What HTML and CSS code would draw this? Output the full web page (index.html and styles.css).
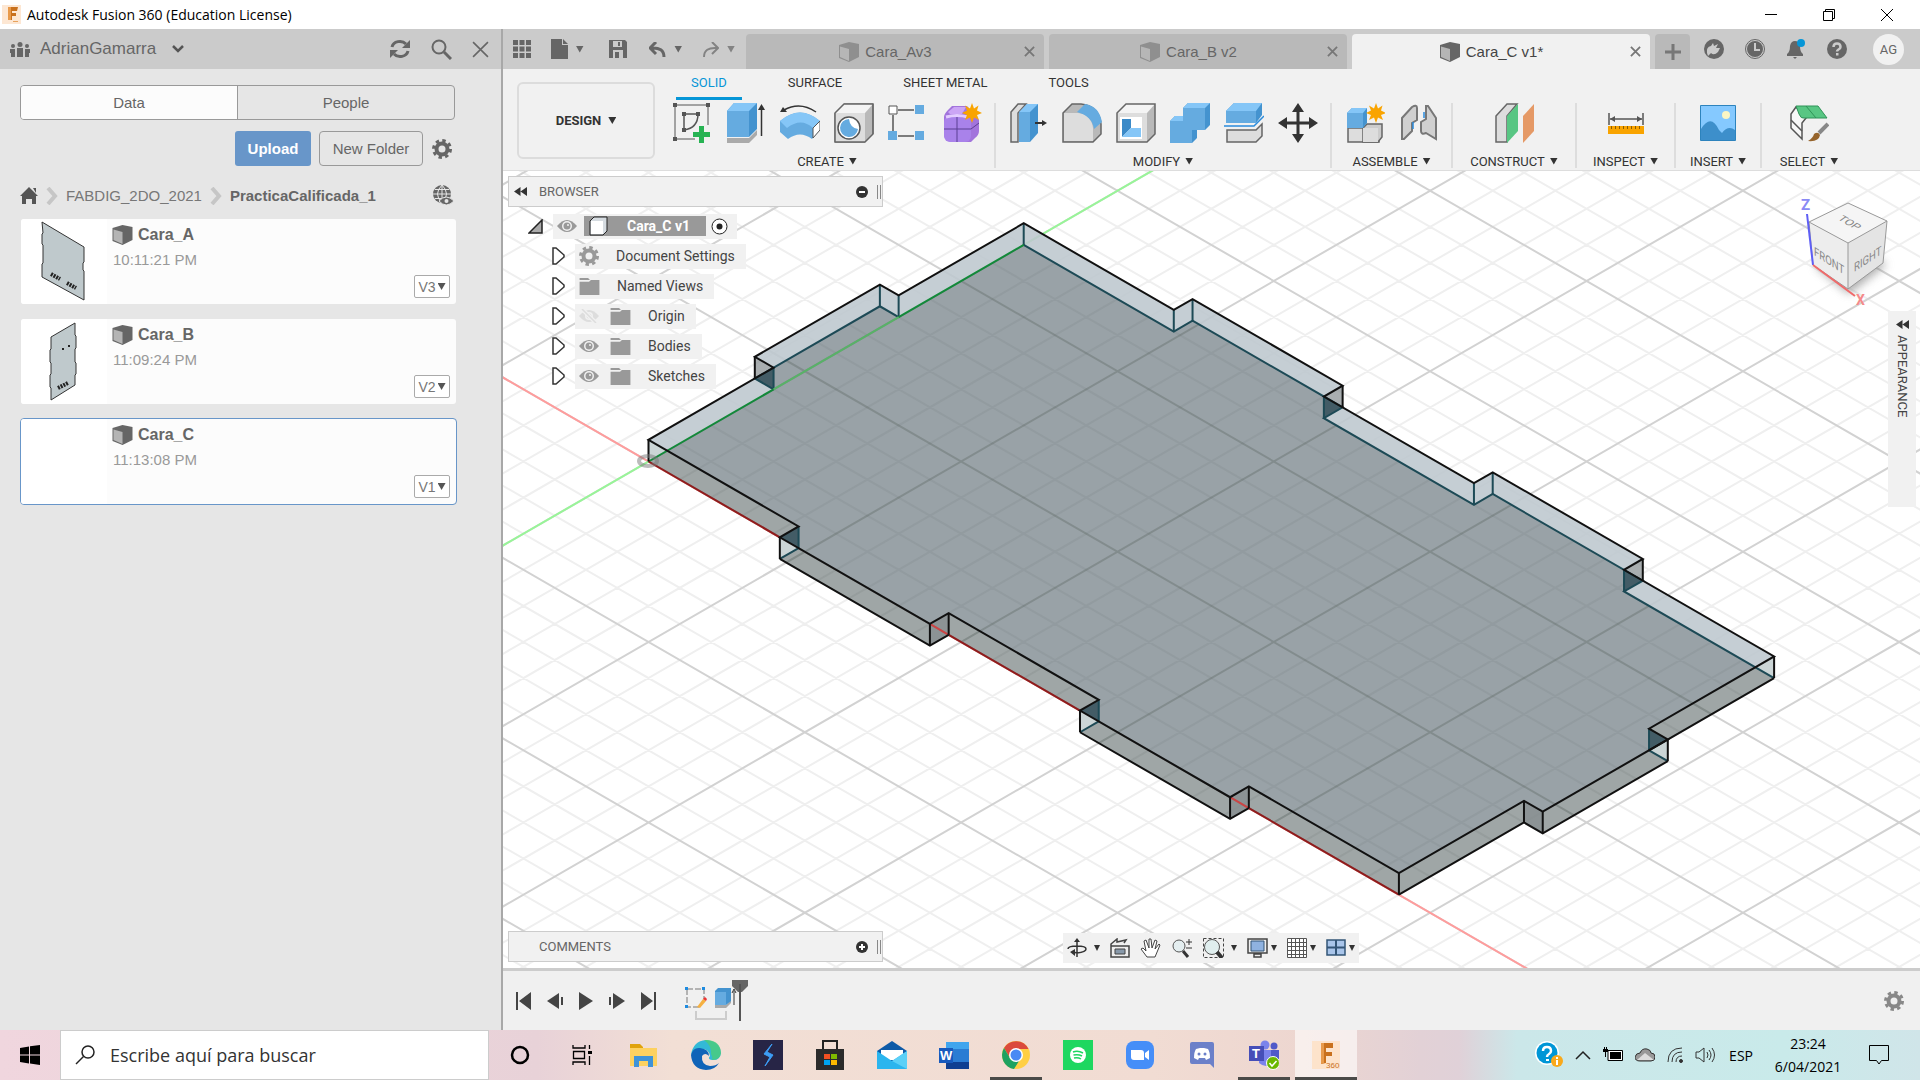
FILE: index.html
```html
<!DOCTYPE html>
<html lang="es">
<head>
<meta charset="utf-8">
<title>Autodesk Fusion 360 (Education License)</title>
<link rel="stylesheet" href="styles.css">
</head>
<body>
<svg class="defs" aria-hidden="true">
  <symbol id="cube" viewBox="0 0 20 20"><path d="M0 3 10 0l10 2v13l-10 5L0 16z" fill="#666"/><path d="M1 4.500l9 2.500v12L1 15z" fill="#b5b5b5"/></symbol>
  <symbol id="gear" viewBox="0 0 20 20"><circle cx="10" cy="10" r="5.500" fill="none" stroke="currentColor" stroke-width="4"/><circle cx="10" cy="10" r="8.500" fill="none" stroke="currentColor" stroke-width="3" stroke-dasharray="3.400 3.280"/></symbol>
  <symbol id="close" viewBox="0 0 16 16"><path d="M1 1l14 14M15 1 1 15" fill="none" stroke="currentColor" stroke-width="1.500"/></symbol>
  <symbol id="close-bold" viewBox="0 0 12 12"><path d="M1 1l10 10M11 1 1 11" fill="none" stroke="#777" stroke-width="2"/></symbol>
  <symbol id="rewind" viewBox="0 0 13 9"><path d="M6.500 0v9L0 4.500zM13 0v9L6.500 4.500z" fill="#333"/></symbol>
  <symbol id="eye" viewBox="0 0 20 14"><path d="M0 7Q10-5 20 7 10 19 0 7z" fill="#999"/><circle cx="10" cy="7" r="5" fill="#f1f1f1"/><circle cx="10" cy="7" r="3.500" fill="#999"/><circle cx="11" cy="6" r="1" fill="#f1f1f1"/></symbol>
  <symbol id="eye-off" viewBox="0 0 20 14"><path d="M0 7Q10-5 20 7 10 19 0 7z" fill="#ddd"/><circle cx="10" cy="7" r="4" fill="#f1f1f1"/><circle cx="10" cy="7" r="2.500" fill="#ddd"/><path d="M3 0l14 14" stroke="#f1f1f1" stroke-width="4"/><path d="M3 0l14 14" stroke="#ddd" stroke-width="1.500"/></symbol>
  <symbol id="folder" viewBox="0 0 21 18"><path d="M0 0h9l2 2H0zM0 4h10l2-2h9v16H0z" fill="#999"/></symbol>
  <symbol id="expand" viewBox="0 0 13 18"><path d="M1 1h3l8 7v2l-8 7H1z" fill="#fff" stroke="#333" stroke-width="1.500"/></symbol>
  <symbol id="star" viewBox="0 0 20 20"><path d="M10 0l2 5.500 4.500-3-1.500 5L20 10l-5 2 2 5-5-2.500L10 20l-2-5.500L3 17l2-5-5-2 5-2.500-2-5 5 3z" fill="#f9a400"/></symbol>
</svg>

<header class="titlebar">
  <svg class="app-icon" viewBox="0 0 19 19"><path d="M0 0h19v19H0z" fill="#fde7d3"/><path d="M6 2h10l-1 4h-5v2h4v3h-4v4H6z" fill="#c9711d"/><path d="M6 2h3v13H6z" fill="#e89a4b"/><path d="M11 16h5v1h-5z" fill="#e8a25c"/></svg>
  <h1 class="title">Autodesk Fusion 360 (Education License)</h1>
  <button class="win-btn" aria-label="Minimizar"><svg width="12" height="12"><path d="M0 5.500h12" stroke="#000"/></svg></button>
  <button class="win-btn" aria-label="Restaurar"><svg width="12" height="12" fill="none" stroke="#000"><path d="M.5 2.500h9v9h-9zM2.500 2V.5h9v9H10"/></svg></button>
  <button class="win-btn" aria-label="Cerrar"><svg width="12" height="12"><path d="M0 0l12 12M12 0 0 12" stroke="#000"/></svg></button>
</header>

<main class="app">
  <aside class="data-panel">
    <div class="panel-head">
      <svg width="20" height="15" fill="#666"><circle cx="3" cy="4" r="2"/><circle cx="10" cy="2.500" r="2.500"/><circle cx="17" cy="4" r="2"/><path d="M0 7h5v8H1v-4H0zM7 6h6v9H7zM15 7h5v4h-1v4h-4z"/></svg>
      <button class="team">AdrianGamarra <svg width="12" height="8"><path d="M1 1l5 5 5-5" fill="none" stroke="#555" stroke-width="2.500"/></svg></button>
      <div class="panel-tools">
        <button aria-label="Refresh"><svg width="22" height="20" viewBox="0 0 22 20"><path d="M3 8a8 7 0 0 1 14-3M19 12a8 7 0 0 1-14 3" fill="none" stroke="#666" stroke-width="3"/><path d="M21 1v8h-8zM1 19v-8h8z" fill="#666"/></svg></button>
        <button aria-label="Search"><svg width="21" height="21"><circle cx="8" cy="8" r="6.500" fill="none" stroke="#666" stroke-width="2"/><path d="M13 13l7 7" stroke="#666" stroke-width="3"/></svg></button>
        <button aria-label="Close panel" class="gray"><svg width="17" height="17"><use href="#close"/></svg></button>
      </div>
    </div>
    <div class="panel-body">
      <div class="segmented"><button class="on">Data</button><button>People</button></div>
      <div class="actions">
        <button class="upload">Upload</button>
        <button class="new-folder">New Folder</button>
        <button class="gear-btn" aria-label="Settings"><svg width="20" height="20"><use href="#gear"/></svg></button>
      </div>
      <nav class="crumbs">
        <a href="#" aria-label="Home"><svg width="18" height="17"><path d="M9 0l9 9h-2v8h-4v-5H6v5H2V9H0zM13 1h3v5z" fill="#555"/></svg></a>
        <svg width="12" height="18"><path d="M2 1l7 8-7 8" fill="none" stroke="#c6c6c6" stroke-width="4"/></svg>
        <a href="#">FABDIG_2DO_2021</a>
        <svg width="12" height="18"><path d="M2 1l7 8-7 8" fill="none" stroke="#c6c6c6" stroke-width="4"/></svg>
        <a href="#" class="here">PracticaCalificada_1</a>
        <svg class="globe" width="21" height="21"><circle cx="9" cy="9" r="9" fill="#666"/><path d="M9 0v18M0 9h18M2 4.500h14M2 13.500h14M9 0q-9 9 0 18M9 0q9 9 0 18" fill="none" stroke="#e6e6e6"/><path d="M6 16q7-8 15 0-8 8-15 0z" fill="#666" stroke="#e6e6e6"/><circle cx="13.500" cy="16" r="2" fill="#e6e6e6"/></svg>
      </nav>
      <ul class="files">
        <li class="file">
          <div class="thumb"><svg width="86" height="85"><path d="M21 3l42 25v15l-1 1v7l1 1v29L21 58V45l1-1V26l-1-1V15l1-1z" fill="#bfc9cc" stroke="#333"/><path d="M30 55l9 5M46 64l9 5" stroke="#222" stroke-width="4" stroke-dasharray="2 1"/></svg></div>
          <div class="info"><h2><svg width="21" height="20"><use href="#cube"/></svg>Cara_A</h2><time>10:11:21 PM</time></div>
          <button class="version">V3<i class="caret"></i></button>
        </li>
        <li class="file">
          <div class="thumb"><svg width="86" height="85"><path d="M30 18l24-14v12l1 1v12l-1 1v13l1 1v11l-1 1v10L30 81V69l-1-1V56l1-1V44l-1-1V31l1-1z" fill="#bfc9cc" stroke="#333"/><path d="M41 30h2M47 27h2" stroke="#222" stroke-width="2"/><path d="M37 69l10-5" stroke="#222" stroke-width="4" stroke-dasharray="2 1"/></svg></div>
          <div class="info"><h2><svg width="21" height="20"><use href="#cube"/></svg>Cara_B</h2><time>11:09:24 PM</time></div>
          <button class="version">V2<i class="caret"></i></button>
        </li>
        <li class="file selected">
          <div class="thumb"></div>
          <div class="info"><h2><svg width="21" height="20"><use href="#cube"/></svg>Cara_C</h2><time>11:13:08 PM</time></div>
          <button class="version">V1<i class="caret"></i></button>
        </li>
      </ul>
    </div>
  </aside>

  <section class="workspace">
    <div class="quickbar">
      <div class="quick">
        <button aria-label="Data panel"><svg width="18" height="18" fill="#666"><path d="M0 0h5v5H0zM6.500 0h5v5h-5zM13 0h5v5h-5zM0 6.500h5v5H0zM6.500 6.500h5v5h-5zM13 6.500h5v5h-5zM0 13h5v5H0zM6.500 13h5v5h-5zM13 13h5v5h-5z"/></svg></button>
        <button aria-label="File"><svg width="17" height="20"><path d="M0 0h11v6h6v14H0zM12 0l5 5h-5z" fill="#666"/></svg><i class="caret"></i></button>
        <button class="save" aria-label="Save"><svg width="18" height="18"><path d="M0 0h16l2 2v16H0z" fill="#666"/><path d="M4 1h9v6H4zM4 10h10v8H4z" fill="#cbcbcb"/><path d="M9 2h2v4H9zM6 12h4v6H6z" fill="#666"/></svg></button>
        <button aria-label="Undo"><svg width="17" height="15"><path d="M7 0 1 6l6 6M2 6q13-1 13 9" fill="none" stroke="#666" stroke-width="3"/></svg><i class="caret"></i></button>
        <button aria-label="Redo" class="dim"><svg width="17" height="15"><path d="M10 0l6 6-6 6M15 6Q2 5 2 15" fill="none" stroke="#666" stroke-width="2"/></svg><i class="caret"></i></button>
      </div>
      <div class="doc-tabs">
        <div class="doc-tab"><svg class="faded" width="20" height="20"><use href="#cube"/></svg><a href="#">Cara_Av3</a><button aria-label="Close Cara_A"><svg width="11" height="11"><use href="#close-bold"/></svg></button></div>
        <div class="doc-tab"><svg class="faded" width="20" height="20"><use href="#cube"/></svg><a href="#">Cara_B v2</a><button aria-label="Close Cara_B"><svg width="11" height="11"><use href="#close-bold"/></svg></button></div>
        <div class="doc-tab active"><svg width="20" height="20"><use href="#cube"/></svg><a href="#">Cara_C v1*</a><button aria-label="Close Cara_C"><svg width="11" height="11"><use href="#close-bold"/></svg></button></div>
        <button class="add-tab" aria-label="New design"><svg width="16" height="16"><path d="M8 0v16M0 8h16" stroke="#777" stroke-width="3"/></svg></button>
      </div>
      <div class="account">
        <button aria-label="Extensions"><svg width="20" height="20"><circle cx="10" cy="10" r="10" fill="#666"/><path d="M3 14q-1-6 4-7l2-3 1 3 4-2-2 4 4 0-2 4q-4 4-7 1l-3 3z" fill="#cbcbcb"/></svg></button>
        <button aria-label="Job status"><svg width="20" height="20"><circle cx="10" cy="10" r="9.500" fill="#cbcbcb" stroke="#666"/><circle cx="10" cy="10" r="8" fill="#666"/><path d="M10 4v7h5" fill="none" stroke="#cbcbcb" stroke-width="2"/></svg></button>
        <button aria-label="Notifications"><svg width="20" height="20"><path d="M1 15q3-2 3-8 1-5 5-5t5 5q0 6 3 8v2H1zM7 18h4l-2 2z" fill="#666"/><circle cx="15" cy="4" r="4" fill="#0696d7"/></svg></button>
        <button aria-label="Help"><svg width="20" height="20"><circle cx="10" cy="10" r="10" fill="#666"/><path d="M6.500 8q0-3.500 3.500-3.500T13.500 8q0 1.500-2 2.500-1.500 1-1.500 2" fill="none" stroke="#cbcbcb" stroke-width="2.500"/><path d="M9 14h2.500v2.500H9z" fill="#cbcbcb"/></svg></button>
        <button class="avatar">AG</button>
      </div>
    </div>

    <div class="ribbon">
      <button class="design">DESIGN<i class="caret"></i></button>
      <div class="ribbon-main">
        <nav class="ribbon-tabs"><a href="#" class="on">SOLID</a><a href="#">SURFACE</a><a href="#">SHEET METAL</a><a href="#">TOOLS</a></nav>
        <div class="groups">
          <div class="group wide">
            <div class="tools">
              <svg viewBox="0 0 40 40"><path d="M4 2h32v20M3 4v32h20" fill="none" stroke="#555"/><path d="M12 11h14q0 14-14 16z" fill="none" stroke="#555" stroke-width="1.500"/><path d="M1 0h4v4H1zM34 0h4v4h-4zM1 34h4v4H1zM10 9h4v4h-4zM24 9h4v4h-4zM10 25h4v4h-4z" fill="#555"/><path d="M27 23h5v6h6v5h-6v6h-5v-6h-6v-5h6z" fill="#27b353"/></svg>
              <svg viewBox="0 0 40 40"><path d="M1 35h22l8-8v5l-8 8H1z" fill="#aaa"/><path d="M1 8l7-8h23v26l-8 8H1z" fill="#4493cf"/><path d="M1 8l7-8h23l-8 8z" fill="#85c6f7"/><path d="M1 8h22v26H1z" fill="#65abe0"/><path d="M35.500 33V5" stroke="#333" stroke-width="1.500"/><path d="M32 7l3.500-6L39 7z" fill="#333"/></svg>
              <svg viewBox="0 0 40 40"><path d="M0 18q20-17 40 0v9l-8 9q-12-9-24 0L0 29z" fill="#65abe0"/><path d="M0 18q20-17 40 0l-7 7q-12-11-26 0z" fill="#85c6f7"/><path d="M40 18v9l-7 8V25z" fill="#fff" stroke="#555"/><path d="M4 7q16-9 32 2" fill="none" stroke="#333" stroke-width="1.500"/><path d="M0 9l3-5 4 5z" fill="#333"/></svg>
              <svg viewBox="0 0 40 40"><path d="M1 10l9-9h29v30l-8 8H1z" fill="#b9b9b9" stroke="#666"/><path d="M1 10l9-9h29l-8 9z" fill="#f4f4f4"/><path d="M1 10h30v29H1z" fill="#ddd"/><path d="M1 10l9-9h29v30l-8 8H1z" fill="none" stroke="#666" stroke-width="1.500"/><circle cx="15" cy="25" r="11" fill="#fff" stroke="#555" stroke-width="1.500"/><path d="M15 16a9 9 0 1 0 9 10q-8-1-9-10z" fill="#65abe0"/></svg>
              <svg viewBox="0 0 40 40"><path d="M10 7h16M5 12v18M10 33h16" stroke="#555" stroke-width="1.500"/><path d="M1 3h8v8H1z" fill="#fff" stroke="#555"/><path d="M27 2h9v9h-9zM0 28h9v9H0zM27 28h9v9h-9z" fill="#65abe0"/></svg>
              <svg viewBox="0 0 40 40"><path d="M2 14q0-3 4-7l4-4h15l12 14v11q0 4-4 7l-4 4H10q-8-1-8-8z" fill="#a274dc"/><path d="M6 9l6-5h12l-4 7H8z" fill="#cba5f5"/><rect x="2" y="13" width="27" height="26" rx="6" fill="#a982ea"/><path d="M15 13v26M2 26h27l8-6" fill="none" stroke="#5b3e93"/><path d="M4 14q11-3 22 0" fill="none" stroke="#e3ccff" stroke-width="3"/><use href="#star" x="20" y="0" width="20" height="20"/></svg>
            </div>
            <button class="group-label">CREATE<i class="caret"></i></button>
          </div>
          <div class="group wide">
            <div class="tools">
              <svg viewBox="0 0 40 40"><path d="M10 1h8L10 10v29H3V9z" fill="#ddd" stroke="#666" stroke-width="1.500"/><path d="M11 10l8-9h11v29l-8 9H11z" fill="#4493cf"/><path d="M11 9l8-8h11l-8 8z" fill="#85c6f7"/><path d="M11 9h11v30H11z" fill="#65abe0"/><path d="M27 20h8" stroke="#333" stroke-width="2"/><path d="M34 17l5 3-5 3z" fill="#333"/></svg>
              <svg viewBox="0 0 40 40"><path d="M1 10l9-9h9q18 2 20 20v10l-8 8H1z" fill="#b9b9b9"/><path d="M1 10l9-9h9q18 2 20 20v10l-8 8H1z" fill="none" stroke="#666" stroke-width="1.500"/><path d="M2 10h14q13 1 15 15v13H2z" fill="#ddd"/><path d="M15 9l8-8q14 2 17 18l-8 7q-2-13-17-17z" fill="#65abe0"/></svg>
              <svg viewBox="0 0 40 40"><path d="M1 10l9-9h29v30l-8 8H1z" fill="#b9b9b9"/><path d="M1 10l9-9h29l-8 9z" fill="#f4f4f4"/><path d="M1 10h30v29H1z" fill="#ddd"/><path d="M1 10l9-9h29v30l-8 8H1z" fill="none" stroke="#666" stroke-width="1.500"/><path d="M4 14h22v22H4z" fill="#fff"/><path d="M6 16h9v9l-9 9z" fill="#3b8ac8"/><path d="M15 25h10v9H6z" fill="#85c6f7"/></svg>
              <svg viewBox="0 0 40 40"><path d="M0 18l5-5h8V5l5-5h22v22l-5 5h-8v8l-5 5H0z" fill="#4493cf"/><path d="M0 18h13V5h22v22H22v13H0z" fill="#65abe0"/><path d="M13 5l5-5h22l-5 5zM0 18l5-5h8v5z" fill="#85c6f7"/></svg>
              <svg viewBox="0 0 40 40"><path d="M2 8l8-8h28v12l-6 8H2z" fill="#4493cf"/><path d="M2 8l8-8h28l-6 8z" fill="#85c6f7"/><path d="M2 8h30v12H2z" fill="#65abe0"/><path d="M0 23h30l10-10" fill="none" stroke="#2a8bdc" stroke-width="1.500"/><path d="M3 27h29l6-6v12l-6 6H3z" fill="#ddd" stroke="#666" stroke-width="1.500"/></svg>
              <svg viewBox="0 0 40 40"><path d="M20 5v30M5 20h30" stroke="#333" stroke-width="3"/><path d="M20 0l6 9H14zM20 40l-6-9h12zM0 20l9-6v12zM40 20l-9 6V14z" fill="#333"/></svg>
            </div>
            <button class="group-label">MODIFY<i class="caret"></i></button>
          </div>
          <div class="group g-assemble">
            <div class="tools">
              <svg viewBox="0 0 40 40"><path d="M3 25h31V39H3z" fill="#ddd" stroke="#666" stroke-width="1.500"/><path d="M18 25l4-4h15v13l-4 5H18z" fill="#ccc" stroke="#666" stroke-width="1.500"/><path d="M18 25h15v14H18z" fill="#ddd"/><path d="M2 10l5-5h15v15l-4 5H2z" fill="#4493cf"/><path d="M2 10l5-5h15l-4 5z" fill="#85c6f7"/><path d="M2 10h16v15H2z" fill="#65abe0"/><use href="#star" x="21" y="0" width="20" height="20"/></svg>
              <svg viewBox="0 0 40 40"><path d="M3 15 13 4q5-3 5 1v12l-5 3v8L5 36H3zM22 19l5-3V3h2l8 12v21l-10-6q-5 2-5-2z" fill="#d0d0d0" stroke="#777" stroke-width="2"/><path d="M14 19v7M25 9v6" stroke="#2a8bdc" stroke-width="1.500"/></svg>
            </div>
            <button class="group-label">ASSEMBLE<i class="caret"></i></button>
          </div>
          <div class="group g-construct">
            <div class="tools"><svg viewBox="0 0 40 40"><path d="M2 13 13 1h10L13 13v26H2z" fill="#ddd" stroke="#666" stroke-width="1.500"/><path d="M13 13 24 1v27L13 40z" fill="#58c683"/><path d="M29 13 40 1v27L29 40z" fill="#e59966"/></svg></div>
            <button class="group-label">CONSTRUCT<i class="caret"></i></button>
          </div>
          <div class="group g-inspect">
            <div class="tools"><svg viewBox="0 0 40 40"><path d="M3 10v12M37 10v12M4 16h32" fill="none" stroke="#555" stroke-width="1.500"/><path d="M4 16l5-3v6zM36 16l-5-3v6z" fill="#555"/><path d="M2 23h36v8H2z" fill="#f9a400"/><path d="M5 24.500h32" stroke="#8a5c00" stroke-width="3" stroke-dasharray="1 3"/></svg></div>
            <button class="group-label">INSPECT<i class="caret"></i></button>
          </div>
          <div class="group g-insert">
            <div class="tools"><svg viewBox="0 0 40 40"><path d="M2.500 2.500h35v35h-35z" fill="#85c9ff" stroke="#2d83bd"/><circle cx="28" cy="12" r="4" fill="#fbf6c4"/><path d="M3 26q10-16 18 1l3 3q6-8 13-3v10H3z" fill="#3d8fcb"/></svg></div>
            <button class="group-label">INSERT<i class="caret"></i></button>
          </div>
          <div class="group g-select">
            <div class="tools"><svg viewBox="0 0 40 40"><path d="M7 4 2 11v14l11 11V20l4-5z" fill="#f7f7f7" stroke="#555" stroke-width="1.500"/><path d="M2 17l11 11" stroke="#555" stroke-width="1.500"/><path d="M7 3h22l9 12H15q-3 1-5-4z" fill="#58c683" stroke="#2f9358"/><path d="M17 3l10 12" stroke="#2f9358"/><path d="M30 30l9-9" stroke="#888" stroke-width="4"/><path d="M19 38q5-3 6-7 4-3 6 1-1 7-12 6z" fill="#96642c"/></svg></div>
            <button class="group-label">SELECT<i class="caret"></i></button>
          </div>
        </div>
      </div>
    </div>

    <div class="viewport">
      <svg class="scene" role="img" aria-label="Cara_C body on the construction grid">
        <defs>
          <path id="grid-minor"/>
          <path id="grid-major"/>
          <path id="outline" d="M0 0H4.800V-.6H9.600V0H14.400V-.6H19.200V0H24V4H24.600V8H24V12H19.200V12.600H14.400V12H9.600V12.600H4.800V12H0V8H-.6V4H0z"/>
          <clipPath id="in-bottom"><use href="#outline"/></clipPath>
        </defs>
        <!-- One unit is one minor grid cell; the matrix is the isometric projection. -->
        <g transform="matrix(31.267 18.050 31.267 -18.050 145.500 290.500)">
          <use href="#grid-minor" class="minor"/>
          <use href="#grid-major" class="major"/>
          <path class="axis-x" d="M-40 0H60"/>
          <path class="axis-y" d="M0-40V60"/>
          <g class="body">
            <use href="#outline" class="top" transform="translate(-.6 .6)"/>
            <use href="#outline" class="bottom"/>
            <g clip-path="url(#in-bottom)">
              <use href="#outline" class="both" transform="translate(-.6 .6)"/>
              <use href="#grid-minor" class="through"/>
              <use href="#grid-major" class="through strong"/>
            </g>
            <path class="light" d="M0 0-.6.6H0zM24 12l-.6.6V12zM4.200 0l.6-.6V0zM13.800 0l.6-.6V0zM24 8h.6l-.6.6z"/>
            <path class="gray" d="M9.600-.6V0L9 .6V0zM19.200-.6V0l-.6.6V0zM24 4h.6l-.6.6h-.6zM-.6 4l-.6.6h.6zM9 12.600v.6l.6-.6zM18.600 12.600v.6l.6-.6z"/>
            <path class="teal" d="M-.6 4H0l-.6.6zM4.200 0v.6L4.800 0zM13.800 0v.6l.6-.6zM9 12.600l.6-.6v.6zM18.600 12.600l.6-.6v.6zM23.400 8.600 24 8v.6z"/>
          </g>
          <g class="hidden-edges">
            <path d="M0 4H-.6V8H0M0 12H4.800V12.600H9.600V12H14.400V12.600H19.200V12H24M4.800-.6V0M14.400-.6V0M24 8h.6"/>
            <path d="M-.6 8l-.6.6M0 8l-.6.6M0 12l-.6.6M4.800 12l-.6.6M4.800 12.600l-.6.6M14.400 12l-.6.6M14.400 12.600l-.6.6M9.600 12l-.6.6M19.200 12l-.6.6M0 4l-.6.6M4.800 0l-.6.6M14.400 0l-.6.6M24 8l-.6.6"/>
          </g>
          <path class="green-on" d="M0 0V4M0 8V12"/>
          <path class="green-under" d="M0 4V8"/>
          <path class="red-under" d="M9 0h.6M18.600 0h.6"/>
          <path class="red-on" d="M0 0H4.200M9.600 0H13.800M19.200 0H24"/>
          <g class="edges">
            <use href="#outline" transform="translate(-.6 .6)"/>
            <path d="M4.800-.6H9.600V0M14.400-.6H19.200V0M24 0V4h.6V8M24 8V12"/>
            <path d="M0 0-.6.6M4.800-.6l-.6.6M9.600-.6 9 0M9.600 0 9 .6M14.400-.6l-.6.6M19.200-.6l-.6.6M19.200 0l-.6.6M24 0l-.6.6M24 4l-.6.6M24.600 4l-.6.6M24.600 8l-.6.6M24 12l-.6.6M19.200 12.600l-.6.6M9.600 12.600 9 13.200M-.6 4l-.6.6"/>
          </g>
        </g>
        <ellipse cx="145" cy="290" rx="9" ry="5" fill="none" stroke="#777" stroke-opacity=".5" stroke-width="4"/>
      </svg>

      <div class="left-stack">
        <section class="browser">
          <div class="float-bar"><svg width="13" height="9"><use href="#rewind"/></svg><h2>BROWSER</h2><button aria-label="Collapse"><svg width="12" height="12"><circle cx="6" cy="6" r="6" fill="#333"/><path d="M3 6h6" stroke="#fff" stroke-width="2"/></svg></button><i class="grip"></i></div>
          <ul class="tree">
            <li class="root"><svg width="15" height="15"><path d="M14 1v13H1z" fill="#aaa" stroke="#222" stroke-width="1.500"/></svg>
              <div class="node"><svg width="20" height="14"><use href="#eye"/></svg><span class="picked"><svg width="19" height="20" viewBox="0 0 19 20"><path d="M1 5l4-4h13v14l-4 4H1z" fill="#d5dbe0" stroke="#222"/><path d="M2 5h12v13H2z" fill="#fff"/></svg>Cara_C v1</span><svg width="17" height="17"><circle cx="8.500" cy="8.500" r="7.500" fill="#fff" stroke="#222"/><circle cx="8.500" cy="8.500" r="3" fill="#222"/></svg></div></li>
            <li><svg width="13" height="18"><use href="#expand"/></svg><div class="node"><svg class="mid" width="20" height="20"><use href="#gear"/></svg><span>Document Settings</span></div></li>
            <li><svg width="13" height="18"><use href="#expand"/></svg><div class="node"><svg width="21" height="17"><use href="#folder"/></svg><span>Named Views</span></div></li>
            <li><svg width="13" height="18"><use href="#expand"/></svg><div class="node"><svg width="20" height="14"><use href="#eye-off"/></svg><svg class="second" width="21" height="17"><use href="#folder"/></svg><span>Origin</span></div></li>
            <li><svg width="13" height="18"><use href="#expand"/></svg><div class="node"><svg width="20" height="14"><use href="#eye"/></svg><svg class="second" width="21" height="17"><use href="#folder"/></svg><span>Bodies</span></div></li>
            <li><svg width="13" height="18"><use href="#expand"/></svg><div class="node"><svg width="20" height="14"><use href="#eye"/></svg><svg class="second" width="21" height="17"><use href="#folder"/></svg><span>Sketches</span></div></li>
          </ul>
        </section>
        <div class="float-bar comments"><h2>COMMENTS</h2><button aria-label="Expand comments"><svg width="12" height="12"><circle cx="6" cy="6" r="6" fill="#333"/><path d="M3 6h6M6 3v6" stroke="#fff" stroke-width="2"/></svg></button><i class="grip"></i></div>
      </div>

      <div class="navbar">
        <button aria-label="Orbit"><svg width="20" height="20"><path d="M10 2v17M1 11q0-3 9-3t9 3-9 4l-4-1" fill="none" stroke="#333" stroke-width="1.500"/><path d="M7 4l3-4 3 4zM8 11v7l-5-4z" fill="#333"/></svg><i class="caret"></i></button>
        <button aria-label="Look at"><svg width="20" height="20"><path d="M1 8h18v11H1zM1 8V6l6-5v3l9-2-2 3" fill="#eee" stroke="#444" stroke-width="1.500"/><path d="M5 11h10v5H5z" fill="#89a" stroke="#444"/></svg></button>
        <button aria-label="Pan"><svg width="22" height="20"><path d="M7 19 1 11l2-1 3 3L4 3l2-1 3 8V1h2l1 9 3-8 2 1-2 8 4-5 1 1-5 12z" fill="#fff" stroke="#444"/></svg></button>
        <button aria-label="Zoom"><svg width="21" height="20"><circle cx="7" cy="8" r="6" fill="#e4eef0" stroke="#555"/><path d="M11 13l5 6" stroke="#333" stroke-width="3"/><path d="M17 1v6M14 4h6M14 10h6" stroke="#333"/></svg></button>
        <button class="fit" aria-label="Fit"><svg width="21" height="20"><path d="M.5.5h20v19H.5z" fill="none" stroke="#444" stroke-dasharray="3 2"/><circle cx="9" cy="9" r="7.500" fill="#e0eeee" stroke="#555"/><path d="M14 14l5 6" stroke="#333" stroke-width="4"/></svg><i class="caret"></i></button>
        <button aria-label="Display settings"><svg width="21" height="20"><path d="M1 1h19v14H1zM7 16h7v3H7z" fill="#eee" stroke="#444" stroke-width="1.500"/><path d="M4 3h13v10H4z" fill="#8fb2e0" stroke="#357"/></svg><i class="caret"></i></button>
        <button aria-label="Grid and snaps"><svg width="20" height="20"><path d="M.5.5h19v19H.5z" fill="#fff"/><path d="M.5.5h19v19H.5zM4.500 0v20M8.500 0v20M12.500 0v20M16.500 0v20M0 4.500h20M0 8.500h20M0 12.500h20M0 16.500h20" fill="none" stroke="#555"/></svg><i class="caret"></i></button>
        <button aria-label="Viewports"><svg width="20" height="20"><path d="M1 2h18v15H1z" fill="#a9c5ea" stroke="#357" stroke-width="1.500"/><path d="M10 2v15M1 9.500h18" stroke="#357" stroke-width="2"/></svg><i class="caret"></i></button>
      </div>

      <div class="right-stack">
        <svg class="viewcube" width="100" height="130" viewBox="0 0 100 130" role="img" aria-label="ViewCube">
          <defs><filter id="soft" x="-30%" y="-30%" width="160%" height="160%"><feGaussianBlur stdDeviation="5"/></filter></defs>
          <path d="M20 85l34-18 38 16-38 30z" fill="#777" opacity=".6" filter="url(#soft)"/>
          <path d="M14 41l39-19 39 18-39 22z" fill="#f5f5f5"/><path d="M14 41l39 21v46L18 84z" fill="#ededed"/><path d="M92 40 53 62v46l35-26z" fill="#e4e4e4"/>
          <path d="M14 41l39-19 39 18-39 22zM53 62v46M14 41l4 43 35 24 35-26 4-42" fill="none" stroke="#999"/>
          <path d="M12 33l6 51" stroke="#5e5ef5" stroke-width="2"/><path d="M18 84l42 31" stroke="#f06a6a" stroke-width="2"/>
          <g class="cube-text"><text transform="matrix(.86 .5 -.7 .5 42 38)">TOP</text><text transform="matrix(.8 .52 0 1 19 74)">FRONT</text><text transform="matrix(.8 -.52 0 1 59 91)">RIGHT</text></g>
          <text x="6" y="29" class="axis-z-label">Z</text><text x="61" y="124" class="axis-x-label">X</text>
        </svg>
        <button class="appearance"><svg width="13" height="9"><use href="#rewind"/></svg><span>APPEARANCE</span></button>
      </div>
    </div>

    <div class="timeline">
      <div class="playback">
        <button aria-label="First"><svg width="16" height="18"><path d="M0 0h2v18H0zM15 0v18L3 9z" fill="#444"/></svg></button>
        <button aria-label="Previous"><svg width="16" height="18"><path d="M12 1v16L0 9zM14 5h2v8h-2z" fill="#444"/></svg></button>
        <button aria-label="Play"><svg width="16" height="18"><path d="M1 0l14 9-14 9z" fill="#444"/></svg></button>
        <button aria-label="Next"><svg width="16" height="18"><path d="M4 1v16l12-8zM0 5h2v8H0z" fill="#444"/></svg></button>
        <button aria-label="Last"><svg width="16" height="18"><path d="M14 0h2v18h-2zM1 0v18l12-9z" fill="#444"/></svg></button>
      </div>
      <svg class="history" width="66" height="42" viewBox="0 0 66 42"><path d="M2 9h17v10M2 9v18h12" fill="none" stroke="#777" stroke-dasharray="6 2"/><path d="M0 7h3v3H0zM17 7h3v3h-3zM0 25h3v3H0z" fill="#1d8be0"/><path d="M12 27l6-8 3 2-6 7z" fill="#f5b041"/><path d="M18 19l2-2 2 2-1 2z" fill="#e33"/><path d="M30 25h11l5-5v3l-5 5H30z" fill="#aaa"/><path d="M30 11l3-3h13v13l-5 4H30z" fill="#4493cf"/><path d="M30 12h11v13H30z" fill="#65abe0"/><path d="M49 25V11M47 13l2-4 2 4" fill="none" stroke="#333"/><path d="M11 31v8h30v-8" fill="none" stroke="#ccc" stroke-width="2"/><path d="M47 0h16v6l-6 6h-4l-6-6z" fill="#666"/><path d="M54 4h2v37h-2z" fill="#555"/></svg>
      <button class="timeline-gear" aria-label="Timeline settings"><svg width="20" height="20"><use href="#gear"/></svg></button>
    </div>
  </section>
</main>

<footer class="taskbar">
  <button class="start" aria-label="Inicio"><svg width="20" height="20"><path d="M0 3l9-1.500V9.500H0zM10 1.300 20 0v9.500H10zM0 10.500h9v8L0 17zM10 10.500h10V20l-10-1.500z"/></svg></button>
  <label class="search"><svg width="20" height="20"><circle cx="13" cy="7" r="6" fill="none" stroke="#222" stroke-width="1.500"/><path d="M8.500 11.500 1 19" stroke="#222" stroke-width="1.500"/></svg><input type="text" placeholder="Escribe aquí para buscar"></label>
  <div class="apps">
    <button aria-label="Cortana"><svg width="20" height="20"><circle cx="10" cy="10" r="8" fill="none" stroke="#000" stroke-width="2.500"/></svg></button>
    <button aria-label="Vista de tareas"><svg width="20" height="20" fill="none" stroke="#000"><path d="M1 0v3h12V0M1.500 6.500h11v7h-11zM1 20v-3h12v3M17.500 0v4M17.500 11v9" stroke-width="1.300"/><path d="M16 7.500h4" stroke-width="3"/></svg></button>
    <button aria-label="Explorador"><svg width="28" height="24"><path d="M0 1h10l3 3v4H0z" fill="#e0a30c"/><path d="M0 5h27v18H0z" fill="#fdd160"/><path d="M4 24V13h19v11h-5v-6H9v6z" fill="#3f93d8"/></svg></button>
    <button aria-label="Edge"><svg width="30" height="30"><path d="M0 15Q2 1 15 0q14 1 15 13-1 8-9 7-5-1-2-4-1-7-8-7T0 15z" fill="#33b9d6"/><path d="M13 0q16-1 17 13-1 7-9 7 1-3-1-6 1-8-7-14z" fill="#4fd06b" opacity=".7"/><path d="M0 15q2-8 9-7 9 1 9 8-4-4-7 0-1 9 8 10 6 0 9-3-4 7-13 7Q1 29 0 15z" fill="#1064b8"/></svg></button>
    <button aria-label="Estudio"><svg width="30" height="30"><path d="M0 0h30v30H0z" fill="#272546"/><path d="M19 4l-8 10 6 3-5 9 8-11-6-3z" fill="#3d9df5" stroke="#3d9df5"/></svg></button>
    <button aria-label="Microsoft Store"><svg width="30" height="30"><path d="M8 9V1h14v8" fill="none" stroke="#222" stroke-width="2"/><path d="M1 9h28v21H1z" fill="#2b2b2b"/><path d="M9 14h6v5H9z" fill="#f25022"/><path d="M16 14h6v5h-6z" fill="#7fba00"/><path d="M9 20h6v5H9z" fill="#00a4ef"/><path d="M16 20h6v5h-6z" fill="#ffb900"/></svg></button>
    <button aria-label="Correo"><svg width="30" height="28"><path d="M0 10 15 0l15 10v18H0z" fill="#0e5aa7"/><path d="M4 9h22v10H4z" fill="#fff"/><path d="M0 10l15 10 15-10v18H0z" fill="#2bb5ee"/><path d="M15 20l15-10v18z" fill="#5bd0f7"/></svg></button>
    <button aria-label="Word"><svg width="30" height="27"><path d="M7 0h23v27H7z" fill="#2b7cd3"/><path d="M7 0h23v7H7z" fill="#41a5ee"/><path d="M7 20h23v7H7z" fill="#103f91"/><path d="M0 6h14v15H0z" fill="#185abd"/><text x="1" y="18" class="glyph">W</text></svg></button>
    <button aria-label="Chrome" class="running"><svg width="28" height="28"><circle cx="14" cy="14" r="14" fill="#ffcf44"/><path d="M2 7A14 14 0 0 1 26.500 8H14l-6 9z" fill="#db4a3c"/><path d="M2 7a14 14 0 0 0 10 21l7-11H8z" fill="#1da261"/><circle cx="14" cy="14" r="7" fill="#fff"/><circle cx="14" cy="14" r="5.500" fill="#4a8af4"/></svg></button>
    <button aria-label="Spotify"><svg width="30" height="30"><path d="M0 0h30v30H0z" fill="#1ed760"/><circle cx="15" cy="15" r="8" fill="#fff"/><path d="M10 12q5-2 10 1M10.500 15q5-1 8.500 1M11 18q4-1 7 1" fill="none" stroke="#1ed760" stroke-width="1.500"/></svg></button>
    <button aria-label="Zoom"><svg width="28" height="28"><rect width="28" height="28" rx="8" fill="#468ef8"/><path d="M5 9h10q3 0 3 3v7H8q-3 0-3-3zM19 12l4-3v10l-4-3z" fill="#fff"/></svg></button>
    <button aria-label="Discord"><svg width="24" height="26"><path d="M2 0h20q2 0 2 2v24l-4-4H2q-2 0-2-2V2q0-2 2-2z" fill="#6b80c9"/><path d="M4 16q0-6 2-9l4-1h4l4 1q2 3 2 9l-4 2-1-2H9l-1 2z" fill="#fff"/><circle cx="9" cy="12" r="1.500" fill="#6b80c9"/><circle cx="15" cy="12" r="1.500" fill="#6b80c9"/></svg></button>
    <button aria-label="Teams" class="running"><svg width="30" height="30"><circle cx="16" cy="5" r="4.500" fill="#7b83eb"/><circle cx="25" cy="6" r="3.500" fill="#5059c9"/><path d="M10 10h14v13q-7 6-14 0z" fill="#7b83eb"/><path d="M22 10h8v12h-8z" fill="#5059c9"/><path d="M0 6h15v15H0z" fill="#464eb8"/><text x="3" y="18" class="glyph">T</text><circle cx="24" cy="23" r="6.500" fill="#6bb700" stroke="#fff"/><path d="M20.500 23l2.500 3 4.500-5" fill="none" stroke="#fff" stroke-width="1.500"/></svg></button>
    <button aria-label="Fusion 360" class="running current"><svg width="28" height="28"><path d="M0 0h28v28H0z" fill="#fde3cb"/><path d="M9 2h12v5h-7v4h6v4h-6v7l-5 1z" fill="#c9711d"/><path d="M9 2h3v20l-3 1z" fill="#e89a4b"/><text x="14" y="27" class="mini">360</text></svg></button>
  </div>
  <div class="tray">
    <svg width="28" height="28"><circle cx="12" cy="12" r="12" fill="#fff"/><circle cx="12" cy="12" r="10.500" fill="#0096d6"/><path d="M8 10q0-4 4-4t4 4q0 2-2 3-2 1-2 3" fill="none" stroke="#fff" stroke-width="2.500"/><path d="M11 18h3v2h-3z" fill="#fff"/><circle cx="22" cy="20" r="6" fill="#f9a91b"/><path d="M21 16h2v2h-2zM21 19h2v5h-2z" fill="#fff"/></svg>
    <svg width="16" height="10"><path d="M1 9l7-7 7 7" fill="none" stroke="#222" stroke-width="1.500"/></svg>
    <svg width="20" height="16"><path d="M5 3.500h14.500v10H5z" fill="#fff" stroke="#000"/><path d="M7 5h11v7H7zM0 2h5v3H0zM1 0h1v2H1zM3 0h1v2H3zM2 5h1v5H2z"/></svg>
    <svg width="20" height="14"><path d="M5 13q-5 0-5-4 1-4 5-4 2-5 7-4 4 1 4 4 4 0 4 4 0 4-4 4z" fill="#999" stroke="#333"/><path d="M2 12l8-7 9 7z" fill="#ddd"/></svg>
    <svg width="16" height="16" fill="none" stroke="#333"><path d="M1 15Q1 1 15 1M5 15Q5 5 15 5M9 15q0-6 6-6"/><circle cx="14" cy="14" r="1.500" fill="#333"/></svg>
    <svg width="20" height="16" fill="none" stroke="#333"><path d="M1 5h3l5-4v14l-5-4H1z"/><path d="M12 5q2 3 0 6M14 3q4 5 0 10M17 1q5 7 0 14"/></svg>
    <span class="lang">ESP</span>
    <div class="clock"><span>23:24</span><span>6/04/2021</span></div>
    <button aria-label="Notificaciones"><svg width="20" height="20"><path d="M.5.500h19v15h-7L10 19l-2.500-3.500h-7z" fill="none" stroke="#000"/></svg></button>
  </div>
</footer>
<script src="grid.js"></script>
</body>
</html>
```

FILE: grid.js
```js
// Construction grid: a minor line on every cell, a major line on every fifth.
const REACH = 60;
let minor = "";
let major = "";
for (let i = -REACH; i <= REACH; i++) {
  const lines = `M${i} ${-REACH}V${REACH}M${-REACH} ${i}H${REACH}`;
  if (i % 5 === 0) major += lines;
  else minor += lines;
}
document.getElementById("grid-minor").setAttribute("d", minor);
document.getElementById("grid-major").setAttribute("d", major);
```

FILE: styles.css
```css
* { box-sizing: border-box; }
body {
  margin: 0;
  min-height: 100vh;
  display: flex;
  flex-direction: column;
  font-family: "Liberation Sans", Arial, sans-serif;
  font-size: 15px;
  color: #666;
  background: #e6e6e6;
}
button { border: 0; padding: 0; background: none; font: inherit; color: inherit; display: flex; align-items: center; }
a { color: inherit; text-decoration: none; }
h1, h2, ul { margin: 0; padding: 0; font: inherit; list-style: none; }
svg { display: block; flex: none; }
.defs { position: absolute; width: 0; height: 0; }
.caret { flex: none; width: 8px; height: 7px; background: currentColor; clip-path: polygon(0 0, 100% 0, 50% 100%); }

/* Window title bar */
.titlebar { height: 29px; display: flex; align-items: center; background: #fff; padding: 0 4px 0 2px; }
.app-icon { width: 19px; height: 19px; }
.title { flex: 1; margin-left: 6px; font: 14px "Open Sans", "Noto Sans", sans-serif; color: #000; }
.win-btn { width: 58px; height: 29px; justify-content: center; }

.app { flex: 1; display: flex; }

/* Data panel */
.data-panel { flex: none; width: 503px; border-right: 2px solid #a8a8a8; background: #e6e6e6; }
.panel-head { height: 40px; display: flex; align-items: center; padding: 0 12px 0 10px; background: #cbcbcb; }
.team { font-size: 17px; gap: 16px; margin-left: 10px; }
.panel-tools { margin-left: auto; display: flex; align-items: center; gap: 20px; }
.gray { color: #666; }
.panel-body { padding: 16px 44px 0 20px; }
.segmented { height: 35px; width: 435px; display: flex; border: 1px solid #999; border-radius: 4px; overflow: hidden; }
.segmented button { flex: 1; justify-content: center; }
.segmented .on { background: #fcfcfc; border-right: 1px solid #999; }
.actions { display: flex; align-items: center; justify-content: flex-end; gap: 8px; margin-top: 11px; padding-right: 5px; }
.upload { width: 76px; height: 35px; justify-content: center; border-radius: 3px; background: #6896c9; color: #fff; font-weight: bold; }
.new-folder { width: 104px; height: 35px; justify-content: center; border: 1px solid #999; border-radius: 4px; }
.gear-btn { color: #666; margin-left: 1px; }
.crumbs { height: 52px; display: flex; align-items: center; gap: 8px; padding-top: 7px; color: #777; }
.crumbs .here { font-weight: bold; color: #666; }
.globe { margin-left: auto; margin-right: 3px; }
.files { display: flex; flex-direction: column; gap: 13px; }
.file { display: flex; width: 437px; height: 87px; border: 1px solid transparent; border-radius: 4px; background: #fcfcfc; background-clip: padding-box; overflow: hidden; }
.file.selected { border-color: #6896c9; }
.thumb { width: 86px; background: #fff; }
.info { flex: 1; padding: 5px 0 0 5px; }
.info h2 { display: flex; align-items: center; gap: 5px; font-size: 16px; font-weight: bold; height: 22px; }
.info time { display: block; margin: 5px 0 0 1px; color: #999; line-height: 18px; }
.version { align-self: flex-end; margin: 0 6px 6px 0; width: 36px; height: 23px; justify-content: center; gap: 2px; border: 1px solid #aaa; border-radius: 2px; font-size: 14px; background: #fff; color: #777; }
.version .caret { color: #555; }

/* Quick access bar and document tabs */
.workspace { flex: 1; min-width: 0; display: flex; flex-direction: column; }
.quickbar { height: 40px; display: flex; align-items: center; background: #cbcbcb; }
.quick { width: 243px; flex: none; display: flex; align-items: center; justify-content: space-between; padding: 0 11px 0 10px; color: #666; }
.quick button { gap: 8px; }
.quick .save { margin: 0 3px 0 5px; }
.dim { opacity: .7; }
.doc-tabs { flex: 1; display: flex; align-items: flex-end; gap: 5px; height: 40px; }
.doc-tab { flex: 1; height: 35px; display: flex; align-items: center; justify-content: center; gap: 6px; padding: 0 9px 0 7px; border-radius: 4px 4px 0 0; background: #b9b9b9; }
.doc-tab > svg { margin-left: auto; }
.doc-tab button { margin-left: auto; }
.doc-tab.active { background: #f1f1f1; color: #444; }
.faded { opacity: .5; }
.add-tab { width: 35px; height: 35px; justify-content: center; border-radius: 4px 4px 0 0; background: #b9b9b9; }
.account { display: flex; align-items: center; gap: 21px; padding: 0 16px 0 14px; }
.avatar { width: 31px; height: 31px; margin-left: 5px; justify-content: center; border-radius: 50%; background: #f1f1f1; font: 13px Roboto, sans-serif; }

/* Ribbon */
.ribbon { height: 102px; display: flex; background: #f1f1f1; border-bottom: 1px solid #ddd; color: #333; font: 13px Roboto, sans-serif; }
.design { width: 138px; height: 77px; margin: 13px 5px 0 14px; justify-content: center; gap: 7px; border: 2px solid #dcdcdc; border-radius: 6px; font-weight: bold; }
.ribbon-main { flex: 1; }
.ribbon-tabs { height: 31px; display: flex; gap: 31px; padding-left: 16px; }
.ribbon-tabs a { padding: 0 15px; line-height: 28px; border-bottom: 3px solid transparent; }
.ribbon-tabs .on { color: #0696d7; border-color: #0696d7; }
.groups { display: flex; padding-top: 3px; }
.group { height: 65px; display: flex; flex-direction: column; align-items: center; border-right: 2px solid #ddd; }
.group:last-child { border: 0; }
.wide { width: 336px; }
.g-assemble { width: 121px; }
.g-construct { width: 124px; }
.g-inspect { width: 99px; }
.g-insert { width: 86px; }
.g-select { width: 94px; }
.tools { flex: none; display: flex; gap: 14px; height: 46px; }
.tools svg { width: 40px; height: 40px; }
.group-label { flex: none; gap: 5px; height: 24px; }

/* Canvas */
.viewport { flex: 1; position: relative; display: flex; align-items: stretch; background: #fff; overflow: hidden; }
.scene { position: absolute; inset: 0; width: 100%; height: 100%; }
.scene path { vector-effect: non-scaling-stroke; stroke-width: 2px; }
#grid-minor, #grid-major { fill: none; }
.minor { stroke: #efefef; }
.major { stroke: #d2d2d2; }
.axis-x { stroke: #ff9c9c; }
.axis-y { stroke: #98f598; }
.top { fill: #bdc7ce; fill-opacity: .88; }
.bottom { fill: #929a9a; fill-opacity: .88; }
.both { fill: #9aa3ab; fill-opacity: .6; }
.through { stroke: #5a6460; opacity: .1; }
.through.strong { opacity: .35; }
.light { fill: #c5d0d1; fill-opacity: .9; }
.gray { fill: #858c8e; fill-opacity: .7; }
.teal { fill: #435c66; }
.hidden-edges { fill: none; stroke: #1d4a56; }
.edges { fill: none; stroke: #111; }
.green-on { stroke: #13893a; }
.green-under { stroke: #58b267; }
.red-on { stroke: #8f1c1c; }
.red-under { stroke: #c44; }

.left-stack { position: relative; width: 380px; display: flex; flex-direction: column; justify-content: space-between; padding: 5px 0 6px 5px; color: #444; font: 14px Roboto, sans-serif; }
.float-bar { height: 31px; display: flex; align-items: center; padding: 0 1px 0 5px; border: 1px solid #ccc; background: #f1f1f1; color: #666; font-size: 13px; }
.float-bar h2 { margin-left: 12px; flex: 1; }
.comments h2 { margin-left: 25px; }
.grip { width: 4px; height: 14px; margin-left: 9px; border: solid #888; border-width: 0 1px; }
.tree { padding-top: 4px; }
.tree li { height: 30px; display: flex; align-items: center; gap: 10px; padding-left: 44px; }
.tree .root { padding-left: 20px; }
.node { height: 25px; display: flex; align-items: center; padding: 0 11px 0 4px; background: #f1f1f1; color: #444; }
.node span { margin-left: 17px; }
.node .second { margin-left: 11px; }
.mid { color: #999; }
.root .node { padding: 0 9px 0 4px; }
.node .picked { width: 122px; height: 20px; display: flex; align-items: center; gap: 19px; margin: 0 5px 0 7px; padding-left: 5px; background: #999; color: #fff; font-weight: bold; }

.navbar { position: relative; align-self: flex-end; width: 296px; height: 30px; margin: 0 auto 5px 180px; display: flex; align-items: center; justify-content: space-between; padding: 0 4px; background: #f1f1f1; color: #333; }
.navbar button { gap: 3px; }
.navbar button:first-child, .navbar .fit { gap: 7px; }
.navbar .caret { width: 6px; height: 6px; }

.right-stack { position: relative; display: flex; flex-direction: column; align-items: flex-end; padding: 10px 4px 0 0; }
.viewcube { margin: 0 21px 0 0; }
.cube-text { font: 12px Roboto, sans-serif; fill: #888; }
.axis-z-label { font: bold 15px Roboto, sans-serif; fill: #8a8af5; }
.axis-x-label { font: bold 14px Roboto, sans-serif; fill: #f58a8a; }
.appearance { width: 28px; height: 196px; flex-direction: column; gap: 6px; padding-top: 9px; background: #f1f1f1; color: #444; font: 13px Roboto, sans-serif; }
.appearance span { writing-mode: vertical-rl; }

/* Timeline */
.timeline { height: 62px; display: flex; align-items: center; border-top: 3px solid #ccc; background: #f0f0f0; padding: 0 16px 0 13px; }
.playback { display: flex; gap: 15px; }
.history { margin-left: 29px; }
.timeline-gear { margin-left: auto; color: #888; }

/* Taskbar */
.taskbar { height: 50px; display: flex; color: #000; background: linear-gradient(90deg, #f0d6de 0, #e8d2d8 28%, #f2dfd5 35%, #f1dcd3 60%, #edd6d0 68%, #e2d1d6 74%, #e0d1d8 76%, #cbe7e9 79%, #c9eaea 93%, #d0e5e9 100%); font-family: "Open Sans", "Noto Sans", sans-serif; }
.start { width: 60px; justify-content: center; }
.search { width: 429px; display: flex; align-items: center; gap: 15px; padding-left: 14px; border: 1px solid #ccc; background: #fff; }
.search input { flex: 1; min-width: 0; border: 0; outline: 0; padding: 0; background: none; font: 18px "Open Sans", "Noto Sans", sans-serif; }
.search input::placeholder { color: #333; opacity: 1; }
.apps { display: flex; }
.apps button { width: 62px; justify-content: center; border-bottom: 3px solid transparent; border-top: 3px solid transparent; }
.apps .running { background: linear-gradient(#4a4a48, #4a4a48) center bottom / 52px 3px no-repeat border-box; }
.apps .current { background: linear-gradient(#4a4a48, #4a4a48) center bottom / 62px 3px no-repeat border-box, rgba(255, 255, 255, .6) border-box; }
.glyph { font: bold 13px "Liberation Sans", sans-serif; fill: #fff; }
.mini { font: 8px "Liberation Sans", sans-serif; fill: #c9711d; }
.tray { margin-left: auto; display: flex; align-items: center; gap: 12px; padding-right: 31px; font-size: 14px; }
.lang { margin-left: 2px; }
.clock { width: 86px; display: flex; flex-direction: column; align-items: center; line-height: 23px; }
.tray button { margin-left: 6px; }
```
